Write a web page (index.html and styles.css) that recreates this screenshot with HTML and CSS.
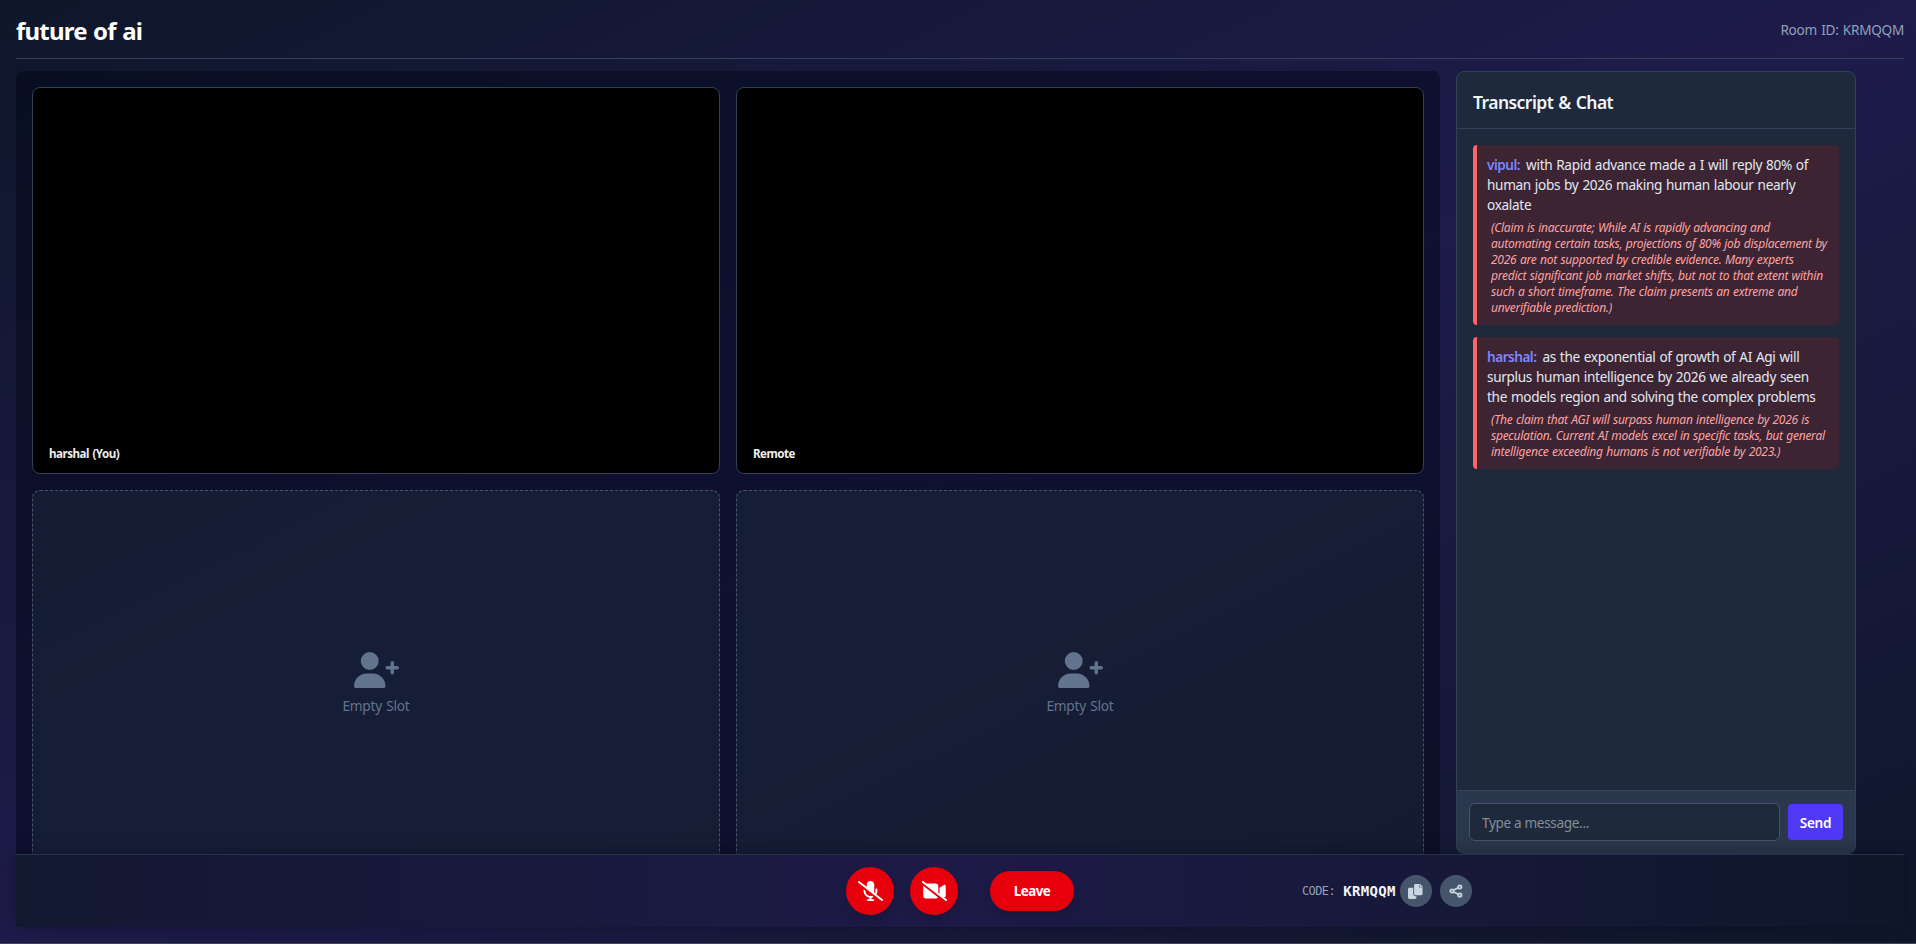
FILE: index.html
```html
<!DOCTYPE html>
<html lang="en">
<head>
<meta charset="utf-8">
<title>future of ai</title>
<link rel="stylesheet" href="styles.css">
</head>
<body>
<svg class="defs" aria-hidden="true">
  <symbol id="user-plus" viewBox="0 0 640 512"><path d="M96 128a128 128 0 1 1 256 0A128 128 0 1 1 96 128zM0 482.3C0 383.8 79.8 304 178.3 304l91.4 0C368.2 304 448 383.8 448 482.3c0 16.4-13.3 29.7-29.7 29.7L29.7 512C13.3 512 0 498.700 0 482.300z"/><path class="plus" d="M544 153v142M473 224h142"/></symbol>
</svg>
<div class="room">
  <header class="header">
    <h1 class="title">future of ai</h1>
    <span class="room-id">Room ID: KRMQQM</span>
  </header>
  <main class="main">
    <section class="grid">
      <div class="tile video"><span class="name">harshal (You)</span></div>
      <div class="tile video"><span class="name remote">Remote</span></div>
      <div class="tile empty"><svg class="person"><use href="#user-plus"/></svg><span class="slot">Empty Slot</span></div>
      <div class="tile empty"><svg class="person"><use href="#user-plus"/></svg><span class="slot">Empty Slot</span></div>
    </section>
    <aside class="chat">
      <h2 class="chat-title"><span>Transcript &amp; Chat</span></h2>
      <div class="messages">
        <article class="message">
          <p class="said"><b class="who">vipul:</b>with Rapid advance made a I will reply 80% of<br>human jobs by 2026 making human labour nearly<br>oxalate</p>
          <p class="check">(Claim is inaccurate; While AI is rapidly advancing and<br>automating certain tasks, projections of 80% job displacement by<br>2026 are not supported by credible evidence. Many experts<br>predict significant job market shifts, but not to that extent within<br>such a short timeframe. The claim presents an extreme and<br>unverifiable prediction.)</p>
        </article>
        <article class="message">
          <p class="said"><b class="who">harshal:</b>as the exponential of growth of AI Agi will<br>surplus human intelligence by 2026 we already seen<br>the models region and solving the complex problems</p>
          <p class="check">(The claim that AGI will surpass human intelligence by 2026 is<br>speculation. Current AI models excel in specific tasks, but general<br>intelligence exceeding humans is not verifiable by 2023.)</p>
        </article>
      </div>
      <form class="composer">
        <input class="input" type="text" placeholder="Type a message...">
        <button class="send" type="button">Send</button>
      </form>
    </aside>
  </main>
  <footer class="controls">
    <div class="calls">
      <button class="round" aria-label="Unmute"><svg viewBox="0 0 640 512"><path d="M38.8 5.1C28.4-3.1 13.3-1.2 5.1 9.2S-1.2 34.7 9.2 42.9l592 464c10.4 8.2 25.5 6.3 33.7-4.1s6.3-25.5-4.1-33.7L472.1 344.7c15.2-26 23.9-56.3 23.9-88.7l0-40c0-13.3-10.7-24-24-24s-24 10.7-24 24l0 40c0 21.2-5.1 41.1-14.2 58.7L416 300.8 416 96c0-53-43-96-96-96s-96 43-96 96l0 54.3L38.8 5.1zM344 430.4c20.4-2.8 39.7-9.1 57.3-18.2l-43.1-33.9C346.1 382 333.3 384 320 384c-70.7 0-128-57.3-128-128l0-8.7L144.7 210c-.5 1.9-.7 3.9-.7 6l0 40c0 89.1 66.2 162.7 152 174.4l0 33.6-48 0c-13.3 0-24 10.7-24 24s10.7 24 24 24l72 0 72 0c13.3 0 24-10.7 24-24s-10.7-24-24-24l-48 0 0-33.6z"/></svg></button>
      <button class="round" aria-label="Start video"><svg viewBox="0 0 640 512"><path d="M38.8 5.1C28.4-3.1 13.3-1.2 5.1 9.2S-1.2 34.7 9.2 42.9l592 464c10.4 8.2 25.5 6.3 33.7-4.1s6.3-25.5-4.1-33.7l-86.4-67.7 13.8 9.2c9.8 6.5 22.4 7.2 32.9 1.6s16.9-16.4 16.9-28.2l0-256c0-11.8-6.5-22.6-16.9-28.2s-23-5-32.9 1.6l-96 64L448 174.9l0 17.1 0 128 0 5.8-32-25.1L416 128c0-35.3-28.7-64-64-64L113.9 64 38.8 5.1zM407 416.7L32.3 121.5c-.2 2.1-.3 4.3-.3 6.5l0 256c0 35.3 28.7 64 64 64l256 0c23.4 0 43.9-12.6 55-31.3z"/></svg></button>
      <button class="leave">Leave</button>
    </div>
    <div class="code">
      <span class="code-label">CODE:</span>
      <span class="code-value">KRMQQM</span>
      <button class="small" aria-label="Copy"><svg class="copy" viewBox="0 0 512 512"><path d="M256 0h140c12.700 0 24.900 5.100 33.900 14.100l53 53c9 9 14.100 21.200 14.100 33.900V336c0 26.500-21.500 48-48 48H256c-26.500 0-48-21.500-48-48V48c0-26.500 21.500-48 48-48zM48 128h130v208c0 44.200 34 78 78 78h32v50c0 26.500-21.500 48-48 48H48c-26.500 0-48-21.500-48-48V176c0-26.500 21.500-48 48-48z"/><path class="fold" d="M392 20v90h90"/></svg></button>
      <button class="small" aria-label="Share"><svg class="share" viewBox="0 0 14 14"><path d="M4.300 6.200 9.300 3.700M4.300 7.800l5 2.500"/><circle cx="3" cy="7" r="1.700"/><circle cx="10.800" cy="3" r="1.700"/><circle cx="10.800" cy="11" r="1.700"/></svg></button>
    </div>
  </footer>
</div>
</body>
</html>
```

FILE: styles.css
```css
* { box-sizing: border-box; margin: 0; padding: 0; }
html { height: 944px; overflow: hidden; background: #45454c; }
body {
  height: 943px;
  font-family: "Noto Sans", "Open Sans", sans-serif;
  background: linear-gradient(to bottom right, #0f172a, #1e1b4b, #0f172a);
  color: #fff;
  overflow: hidden;
}
button { border: 0; font-family: inherit; color: #fff; }
svg { display: block; fill: currentColor; }
.defs { width: 0; height: 0; position: absolute; }
.plus { fill: none; stroke: currentColor; stroke-width: 48; stroke-linecap: round; }
.room { height: 943px; padding: 16px 12px 16px 16px; display: flex; flex-direction: column; }

.header {
  height: 43px;
  display: flex;
  justify-content: space-between;
  border-bottom: 1px solid #314158;
}
.title { font-size: 24px; line-height: 30px; font-weight: 700; letter-spacing: -0.8px; word-spacing: 1px; }
.room-id { font-size: 13.6px; line-height: 28px; color: #90a1b9; letter-spacing: -0.27px; word-spacing: 1px; }

.main { height: 783px; margin-top: 12px; display: flex; gap: 16px; overflow: hidden; }
.grid {
  width: 1424px;
  height: 824px;
  padding: 16px;
  display: grid;
  grid-template-columns: 688px 688px;
  grid-template-rows: 387px 387px;
  gap: 16px;
  background: rgba(2, 6, 24, .5);
  border-radius: 8px;
}
.tile { border-radius: 8px; display: flex; }
.video { background: #000; border: 1px solid #314158; align-items: flex-end; padding: 0 0 11px 16px; }
.name { font-size: 11.6px; line-height: 16px; font-weight: 700; letter-spacing: -0.5px; word-spacing: 1px; color: #eee; }
.empty {
  flex-direction: column;
  align-items: center;
  justify-content: center;
  background: rgba(29, 41, 61, .5);
  border: 1px dashed #45556c;
  color: #62748e;
}
.person { width: 45px; height: 36px; margin-bottom: 8px; }
.slot { font-size: 13.7px; line-height: 20px; letter-spacing: -0.25px; word-spacing: 1px; }

.chat {
  width: 400px;
  height: 783px;
  display: flex;
  flex-direction: column;
  background: #1e293b;
  border: 1px solid #314158;
  border-radius: 8px;
  overflow: hidden;
}
.chat-title {
  height: 57px;
  padding: 16px 16px 0;
  font-size: 17.5px;
  line-height: 28px;
  font-weight: 600;
  letter-spacing: -0.55px;
  word-spacing: 1px;
  color: #f1f5f9;
  border-bottom: 1px solid #314158;
}
.messages { flex: 1; padding: 16px; display: flex; flex-direction: column; gap: 12px; }
.message {
  padding: 10px 0 9px 10px;
  background: #3c2433;
  border-left: 4px solid #ff6467;
  border-radius: 4px;
  white-space: nowrap;
}
.said { font-size: 13.6px; line-height: 20px; color: #e2e8f0; letter-spacing: -0.32px; word-spacing: .7px; }
.who { font-weight: 600; color: #7c86ff; margin-right: 6px; letter-spacing: -0.5px; }
.check { margin: 5px 0 0 4px; font-size: 12px; line-height: 16px; font-style: italic; color: #ffa2a2; letter-spacing: -0.25px; word-spacing: .6px; }
.composer {
  height: 63px;
  padding: 12px;
  display: flex;
  align-items: center;
  gap: 8px;
  background: #2b374d;
  border-top: 1px solid #314158;
}
.input {
  width: 311px;
  height: 38px;
  padding: 0 12px;
  font: 13.6px "Noto Sans", sans-serif;
  letter-spacing: -0.35px;
  color: #fff;
  background: #1e293b;
  border: 1px solid #45556c;
  border-radius: 6px;
}
.input::placeholder { color: #858d99; }
.send { width: 55px; height: 36px; border-radius: 4px; background: #4f39f6; font-size: 13.6px; font-weight: 600; letter-spacing: -0.3px; }

.controls {
  height: 73px;
  flex: none;
  display: grid;
  grid-template-columns: 1fr auto 1fr;
  align-items: center;
  background: linear-gradient(to right, #131831, #1d1a47 50%, #0f172a);
  border-top: 1px solid #26314d;
  box-shadow: 0 0 18px rgba(0, 0, 0, .3);
}
.calls { grid-column: 2; display: flex; align-items: center; gap: 16px; }
.round, .leave { background: #e7000b; box-shadow: 0 6px 10px rgba(0, 0, 0, .12); }
.round { width: 48px; height: 48px; border-radius: 50%; display: grid; place-items: center; }
.round svg { width: 25px; height: 20px; }
.leave { width: 84px; height: 40px; margin-left: 16px; border-radius: 20px; font-size: 13.4px; font-weight: 700; letter-spacing: -0.5px; }
.code { display: flex; align-items: center; margin-left: 228px; }
.code-label { font: 12px "DejaVu Sans Mono", monospace; color: #90a1b9; letter-spacing: -0.6px; margin-right: 8px; }
.code-value { font: bold 14px "DejaVu Sans Mono", monospace; color: #f1f5f9; letter-spacing: .37px; }
.small { width: 32px; height: 32px; border-radius: 50%; display: grid; place-items: center; background: #45556c; color: #cad5e2; margin-left: 8px; }
.code-value + .small { margin-left: 4px; }
.small svg { width: 14px; height: 14px; }
.small .copy { width: 15px; height: 15px; }
.fold { fill: none; stroke: #45556c; stroke-width: 18; }
.small .share { fill: none; stroke: currentColor; stroke-width: 1.8; }
```
